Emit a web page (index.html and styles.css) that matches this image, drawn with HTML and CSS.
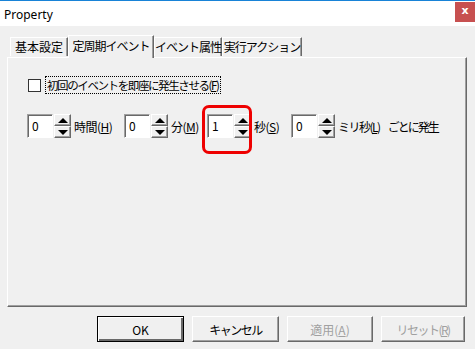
FILE: index.html
```html
<!DOCTYPE html>
<html lang="ja">
<head>
    <meta charset="UTF-8">
    <title>Property</title>
    <link rel="stylesheet" href="styles.css">
</head>
<body>
<div class="window">
    <div class="titlebar">
        <span class="title">Property</span>
        <span class="close">x</span>
    </div>

    <div class="tabs">
        <div class="tab t1">基本設定</div>
        <div class="tab t2 active">定周期イベント</div>
        <div class="tab t3">イベント属性</div>
        <div class="tab t4">実行アクション</div>
    </div>

    <div class="panel">
        <div class="check-row">
            <span class="checkbox"></span>
            <span class="focus">初回のイベントを即座に発生させる(<u>F</u>)</span>
        </div>

        <div class="spin-row">
            <div class="field f1">
                <div class="edit">0</div>
                <div class="spin"><span class="up"></span><span class="down"></span></div>
                <span class="lbl">時間(<u>H</u>)</span>
            </div>
            <div class="field f2">
                <div class="edit">0</div>
                <div class="spin"><span class="up"></span><span class="down"></span></div>
                <span class="lbl">分(<u>M</u>)</span>
            </div>
            <div class="field f3 marked">
                <div class="edit">1</div>
                <div class="spin"><span class="up"></span><span class="down"></span></div>
                <span class="lbl">秒(<u>S</u>)</span>
                <div class="highlight"></div>
            </div>
            <div class="field f4">
                <div class="edit">0</div>
                <div class="spin"><span class="up"></span><span class="down"></span></div>
                <span class="lbl narrow">ミリ秒(<u>L</u>)</span>
                <span class="lbl tail">ごとに発生</span>
            </div>
        </div>
    </div>

    <div class="buttons">
        <button class="btn default w87">OK</button>
        <button class="btn tight w87">キャンセル</button>
        <button class="btn w86" disabled>適用(<u>A</u>)</button>
        <button class="btn tight w84" disabled>リセット(<u>R</u>)</button>
    </div>
</div>
</body>
</html>
```

FILE: styles.css
```css
body {
    margin: 0;
    background: #f0f0f0;
    font-family: "Noto Sans CJK JP", "Noto Sans", sans-serif;
    font-size: 12px;
    color: #000;
}
.window {
    width: 475px;
    height: 349px;
    overflow: hidden;
}
.titlebar {
    height: 25px;
    border-top: 1px solid #1883d7;
    background: white;
    display: flex;
    align-items: center;
    justify-content: space-between;
}
.title {
    font-family: "Noto Sans", sans-serif;
    font-size: 12px;
    padding-left: 4px;
    margin-top: 1px;
}
.close {
    width: 20px;
    height: 20px;
    margin-top: -3px;
    background: #c75050;
    color: white;
    font-family: "DejaVu Sans", sans-serif;
    font-weight: bold;
    font-size: 11px;
    line-height: 18px;
    text-align: center;
}
.tabs {
    display: flex;
    align-items: flex-end;
    height: 23px;
    margin-top: 8px;
    padding-left: 10px;
    position: relative;
    z-index: 1;
}
.tab {
    box-sizing: border-box;
    height: 19px;
    margin-bottom: 1px;
    border: 1px solid #fff;
    border-bottom: none;
    border-right: 1px solid #696969;
    box-shadow: inset -1px 0 0 #a0a0a0;
    line-height: 18px;
    text-align: center;
    background: #f0f0f0;
    white-space: nowrap;
    letter-spacing: -1px;
}
.tab.active {
    height: 23px;
    margin-bottom: -1px;
    line-height: 20px;
}
.t1 { width: 58px; letter-spacing: 0; }
.t2 { width: 86px; }
.t3 { width: 68px; }
.t4 { width: 80px; }
.panel {
    box-sizing: border-box;
    margin-left: 7px;
    width: 460px;
    height: 250px;
    border: 1px solid #fff;
    border-right-color: #696969;
    border-bottom-color: #696969;
    box-shadow: inset -1px -1px 0 #a0a0a0;
    padding: 18px 0 0 20px;
}
.check-row {
    display: flex;
    align-items: center;
    height: 18px;
}
.checkbox {
    box-sizing: border-box;
    width: 13px;
    height: 13px;
    border: 1px solid #333;
    background: white;
    margin-right: 4px;
}
.focus {
    border: 1px dotted #000;
    padding: 0 1px;
    line-height: 16px;
    font-size: 11.5px;
    letter-spacing: -1.4px;
    white-space: nowrap;
}
.spin-row {
    display: flex;
    align-items: center;
    margin-top: 20px;
    margin-left: -1px;
}
.field {
    display: flex;
    align-items: center;
    position: relative;
}
.f1 { width: 97px; }
.f2 { width: 83px; }
.f3 { width: 84px; }
.edit {
    box-sizing: border-box;
    width: 26px;
    height: 24px;
    background: white;
    border: 1px solid;
    border-color: #a0a0a0 #fff #fff #a0a0a0;
    box-shadow: inset 1px 1px 0 #696969;
    padding: 2px 0 0 4px;
    line-height: 18px;
}
.spin {
    display: flex;
    flex-direction: column;
    margin-left: 1px;
}
.spin span {
    box-sizing: border-box;
    width: 17px;
    height: 12px;
    background: #f0f0f0;
    border: 1px solid;
    border-color: #fff #696969 #696969 #fff;
    box-shadow: inset -1px -1px 0 #a0a0a0;
    display: flex;
    align-items: center;
    justify-content: center;
}
.spin .up::after {
    content: "";
    border-left: 5px solid transparent;
    border-right: 5px solid transparent;
    border-bottom: 5px solid #000;
}
.spin .down::after {
    content: "";
    border-left: 5px solid transparent;
    border-right: 5px solid transparent;
    border-top: 5px solid #000;
}
.lbl {
    margin-left: 3px;
    white-space: nowrap;
    letter-spacing: -0.5px;
}
.lbl.narrow {
    letter-spacing: -1.5px;
}
.lbl.tail {
    margin-left: 8px;
    letter-spacing: -2px;
}
.highlight {
    position: absolute;
    left: -5px;
    top: -9px;
    width: 44px;
    height: 43px;
    border: 3px solid #e00;
    border-radius: 7px;
}
.buttons {
    display: flex;
    gap: 8px;
    margin: 9px 0 0 97px;
}
.btn {
    box-sizing: border-box;
    height: 26px;
    background: #f0f0f0;
    border: 1px solid;
    border-color: #fff #696969 #696969 #fff;
    box-shadow: inset -1px -1px 0 #a0a0a0;
    font-family: "Noto Sans CJK JP", "Noto Sans", sans-serif;
    font-size: 12px;
    color: #000;
    padding: 0;
    white-space: nowrap;
}
.btn.tight {
    letter-spacing: -1.5px;
}
.btn.default {
    border: 1px solid #000;
    box-shadow: inset 1px 1px 0 #fff, inset -2px -2px 0 #696969;
}
.btn:disabled {
    color: #a0a0a0;
}
.w87 { width: 87px; }
.w86 { width: 86px; }
.w84 { width: 84px; }
```
